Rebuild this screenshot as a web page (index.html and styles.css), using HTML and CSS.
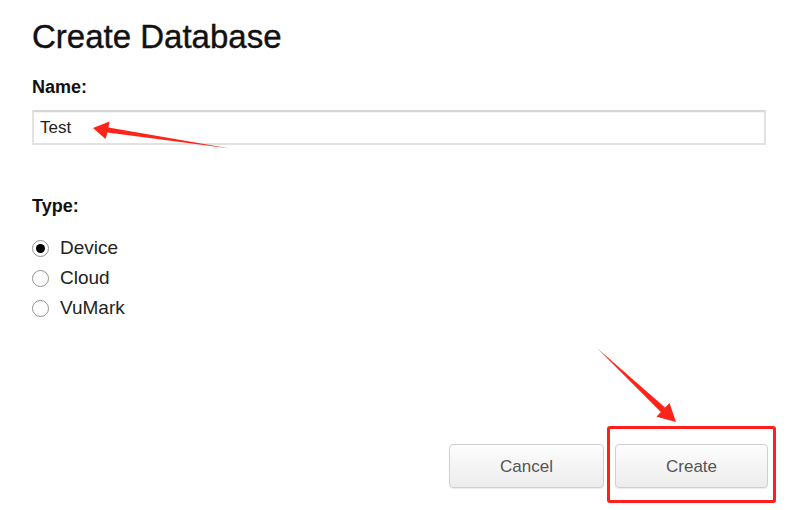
FILE: index.html
```html
<!DOCTYPE html>
<html lang="en">
<head>
<meta charset="utf-8">
<title>Create Database</title>
<link rel="stylesheet" href="styles.css">
</head>
<body>
<main class="dialog">
  <h1 class="title">Create Database</h1>
  <div class="label">Name:</div>
  <div class="field">Test</div>
  <div class="label type-label">Type:</div>
  <ul class="radios">
    <li class="radio-row"><span class="radio checked"></span><span class="radio-text">Device</span></li>
    <li class="radio-row"><span class="radio"></span><span class="radio-text">Cloud</span></li>
    <li class="radio-row"><span class="radio"></span><span class="radio-text">VuMark</span></li>
  </ul>
  <div class="actions">
    <button class="btn">Cancel</button>
    <button class="btn">Create</button>
  </div>
</main>
<div class="highlight"></div>
<svg class="annotations" width="786" height="510" viewBox="0 0 786 510">
  <polygon class="arrow" points="93,128 109.5,121.5 108.5,127.5 230,148.5 107.5,132.5 105.5,139"/>
  <polygon class="arrow" points="676,422 669.5,403 665,407.5 597,348 660.8,411.9 656.5,416.8"/>
</svg>
</body>
</html>
```
FILE: styles.css
```css
html, body {
  margin: 0;
  background: #ffffff;
}
body {
  width: 786px;
  height: 510px;
  overflow: hidden;
  position: relative;
  font-family: "Liberation Sans", Arial, sans-serif;
  color: #111;
}
.dialog {
  padding: 17px 20px 0 32px;
  display: flex;
  flex-direction: column;
}
.title {
  margin: 0;
  font-size: 33px;
  line-height: 40px;
  font-weight: normal;
  color: #111;
  -webkit-text-stroke: 0.4px #111;
}
.label {
  margin-top: 20px;
  font-size: 18px;
  line-height: 20px;
  font-weight: bold;
  color: #111;
}
.field {
  margin-top: 13px;
  height: 35px;
  box-sizing: border-box;
  border: 2px solid #e2e2e2;
  border-top-color: #d6d6d6;
  padding: 0 0 0 6px;
  font-size: 17px;
  line-height: 31px;
  color: #222;
  box-shadow: inset 0 1px 1px rgba(0,0,0,0.05);
}
.type-label {
  margin-top: 51px;
}
.radios {
  list-style: none;
  margin: 17px 0 0 0;
  padding: 0;
  display: flex;
  flex-direction: column;
}
.radio-row {
  height: 30px;
  display: flex;
  align-items: center;
  gap: 11px;
}
.radio {
  width: 17px;
  height: 17px;
  box-sizing: border-box;
  border: 1.6px solid #929292;
  border-radius: 50%;
  display: flex;
  align-items: center;
  justify-content: center;
  background: #fff;
}
.radio.checked::after {
  content: "";
  width: 9px;
  height: 9px;
  border-radius: 50%;
  background: #000;
}
.radio-text {
  font-size: 19px;
  line-height: 22px;
  color: #222;
}
.actions {
  margin-top: 121px;
  margin-right: -2px;
  display: flex;
  justify-content: flex-end;
  gap: 11px;
}
.btn {
  height: 44px;
  width: 155px;
  box-sizing: border-box;
  border: 1px solid #cfcfcf;
  border-radius: 4px;
  background: linear-gradient(#fdfdfd, #ececec);
  box-shadow: 0 1px 1px rgba(0,0,0,0.08);
  font-family: "Liberation Sans", Arial, sans-serif;
  font-size: 17px;
  color: #555;
  padding: 2px 0 0 0;
}
.btn + .btn {
  width: 153px;
}
.highlight {
  position: absolute;
  left: 607px;
  top: 426px;
  width: 169px;
  height: 77px;
  box-sizing: border-box;
  border: 3px solid #ff1f1f;
  border-radius: 3px;
}
.annotations {
  position: absolute;
  left: 0;
  top: 0;
}
.arrow {
  fill: #ff2419;
}
```
